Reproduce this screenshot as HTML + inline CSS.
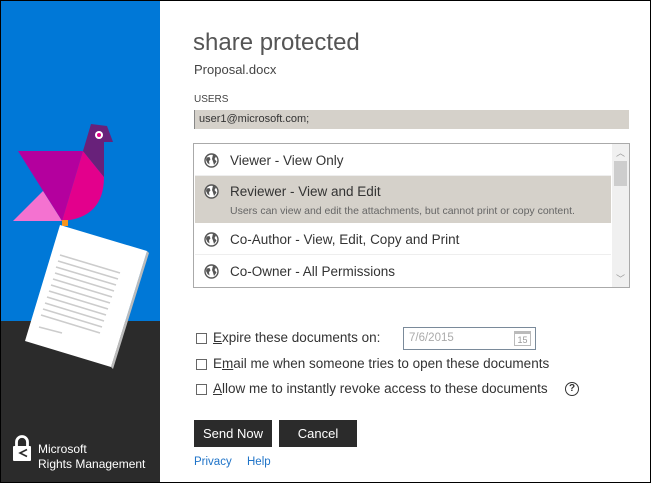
<!DOCTYPE html><html><head><style>
*{margin:0;padding:0;box-sizing:border-box}
body{width:651px;height:483px;overflow:hidden;font-family:"Liberation Sans",sans-serif;background:#fff;position:relative}
.a{position:absolute;white-space:nowrap}
.row{position:absolute;left:1px;width:416px;font-size:13.5px;color:#333}
.row .t{position:absolute;left:35px}
.g{position:absolute;left:9px;width:15px;height:15px}
.cb{position:absolute;left:196px;width:11px;height:11px;border:1px solid #666;background:#fff}
.lbl{position:absolute;left:213px;font-size:13.5px;color:#333}
.btn{position:absolute;top:420px;height:27px;background:#2b2b2b;color:#fff;font-size:13px;text-align:center;line-height:27px}
</style></head><body>
<svg width="0" height="0" style="position:absolute"><defs><symbol id="gl" viewBox="0 0 15 15"><circle cx="7.5" cy="7.5" r="6.5" fill="#fff" stroke="#555" stroke-width="1.4"/><path d="M2.5,4.5 L5.5,4 L6.5,6.5 L5,8 L5.5,11.5 L3.5,10 L2,7 Z M9,1.5 L12,3.5 L10.5,6 L12.5,8.5 L10,12 L9,8.5 L8,6 Z" fill="#555"/></symbol></defs></svg>
<div class="a" style="left:0;top:0;width:651px;height:483px;border:1px solid #000;z-index:5;pointer-events:none"></div>
<div class="a" style="left:0;top:0;width:160px;height:321px;background:#0078d7"></div>
<div class="a" style="left:0;top:321px;width:160px;height:162px;background:#2b2b2b"></div>
<svg class="a" style="left:0;top:0" width="160" height="483">
<polygon points="18,151 83,151 62,221" fill="#b4009e"/>
<polygon points="13,221 43,191 62,221" fill="#f472d0"/>
<path d="M83,151 L104,177 Q104,218 62,221 Z" fill="#e3008c"/>
<polygon points="91,124 107,126 113,142 104,142 104,177 83,151" fill="#68217a"/>
<circle cx="99" cy="135" r="4" fill="#fff"/><circle cx="99" cy="135" r="2" fill="#e3008c"/>
<rect x="62" y="220" width="6" height="6" fill="#f7941d"/>
<polygon points="147,251 149,253 113,369 111,367" fill="#bbb"/>
<polygon points="60,225 147,251 111,367 25,341" fill="#fff"/>
<g stroke="#ccc" stroke-width="1.6">
<line x1="60" y1="255" x2="120" y2="273"/><line x1="58" y1="261" x2="118" y2="279"/><line x1="56" y1="267" x2="116" y2="285"/><line x1="55" y1="273" x2="114" y2="291"/><line x1="53" y1="279" x2="112" y2="297"/><line x1="51" y1="285" x2="110" y2="303"/><line x1="49" y1="291" x2="108" y2="309"/><line x1="47" y1="297" x2="106" y2="315"/><line x1="45" y1="303" x2="104" y2="321"/><line x1="43" y1="309" x2="102" y2="327"/><line x1="41" y1="315" x2="100" y2="333"/><line x1="39" y1="327" x2="62" y2="333"/>
</g>
<rect x="13" y="446" width="18" height="15" rx="1" fill="#fff"/>
<path d="M16.5,446 v-4 a5.5,5.5 0 0 1 11,0 v4" stroke="#fff" stroke-width="2.8" fill="none"/>
<path d="M27,449.5 l-7,3.5 l7,3.5" stroke="#2b2b2b" stroke-width="1.6" fill="none"/>
</svg>
<div class="a" style="left:38px;top:442px;color:#fff;font-size:12px;line-height:15px">Microsoft<br>Rights Management</div>

<div class="a" style="left:193px;top:29px;font-size:24px;color:#555">share protected</div>
<div class="a" style="left:194px;top:62px;font-size:13px;color:#444">Proposal.docx</div>
<div class="a" style="left:194px;top:94px;font-size:10px;color:#444">USERS</div>
<div class="a" style="left:194px;top:110px;width:435px;height:19px;background:#d5d1ca;border-left:1px solid #888;font-size:11px;color:#333;padding:3px 4px">user1@microsoft.com;</div>

<div class="a" style="left:193px;top:143px;width:437px;height:145px;border:1px solid #aaa;background:#fff">
<div class="row" style="top:1px;height:31px;border-bottom:1px solid #eee"><svg class="g" style="top:8px"><use href="#gl"/></svg><span class="t" style="top:8px">Viewer - View Only</span></div>
<div class="row" style="top:32px;height:47px;background:#d5d1ca"><svg class="g" style="top:8px"><use href="#gl"/></svg><span class="t" style="top:8px">Reviewer - View and Edit</span><span class="t" style="top:29px;font-size:10.5px;color:#666">Users can view and edit the attachments, but cannot print or copy content.</span></div>
<div class="row" style="top:79px;height:32px;border-bottom:1px solid #eee"><svg class="g" style="top:9px"><use href="#gl"/></svg><span class="t" style="top:9px">Co-Author - View, Edit, Copy and Print</span></div>
<div class="row" style="top:111px;height:32px"><svg class="g" style="top:9px"><use href="#gl"/></svg><span class="t" style="top:9px">Co-Owner - All Permissions</span></div>
<div class="a" style="left:418px;top:0;width:17px;height:143px;background:#f0f0f0"></div>
<div class="a" style="left:420px;top:17px;width:13px;height:25px;background:#cdcdcd"></div>
<div class="a" style="left:422px;top:2px;font-size:9px;color:#999">︿</div>
<div class="a" style="left:422px;top:128px;font-size:9px;color:#999">﹀</div>
</div>

<div class="cb" style="top:333px"></div><div class="lbl" style="top:330px"><u>E</u>xpire these documents on:</div>
<div class="a" style="left:403px;top:327px;width:133px;height:23px;border:1px solid #7a8a9a;font-size:11.5px;color:#aaa;padding:4px 5px">7/6/2015</div>
<div class="a" style="left:514px;top:331px;width:17px;height:15px;border:1px solid #bbb;border-top:3px solid #bbb;font-size:9px;color:#999;text-align:center;line-height:12px">15</div>
<div class="cb" style="top:359px"></div><div class="lbl" style="top:356px">E<u>m</u>ail me when someone tries to open these documents</div>
<div class="cb" style="top:384px"></div><div class="lbl" style="top:381px"><u>A</u>llow me to instantly revoke access to these documents</div>
<div class="a" style="left:565px;top:382px;width:14px;height:14px;border:1.3px solid #333;border-radius:50%;font-size:10px;text-align:center;line-height:12px;font-weight:bold;color:#333">?</div>

<div class="btn" style="left:194px;width:78px">Send Now</div>
<div class="btn" style="left:279px;width:78px">Cancel</div>
<div class="a" style="left:194px;top:456px;font-size:11.5px;color:#1e73c8">Privacy</div>
<div class="a" style="left:247px;top:456px;font-size:11.5px;color:#1e73c8">Help</div>
</body></html>
